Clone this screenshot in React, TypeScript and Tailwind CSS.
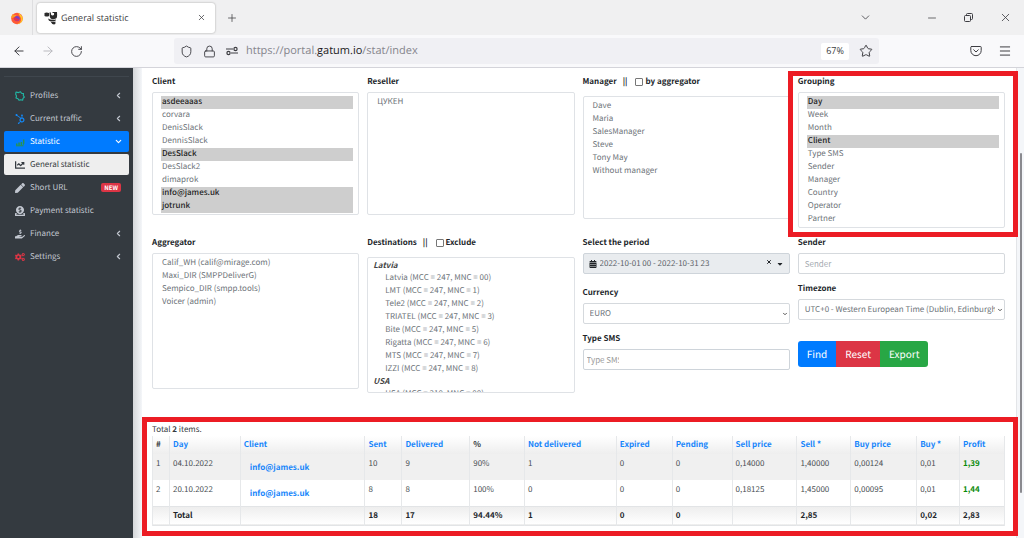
import React, { useState } from 'react';
import { ArrowLeft, ArrowRight, ChevronDown, ChevronLeft, Lock, Menu, Minus, Plus, RotateCw, Shield, Star, X } from 'lucide-react';
import { FaCalendarAlt, FaCaretDown, FaChartLine, FaCogs, FaDonate, FaHandHoldingUsd, FaHubspot, FaPen } from 'react-icons/fa';

const clients = ['asdeeaaas', 'corvara', 'DenisSlack', 'DennisSlack', 'DesSlack', 'DesSlack2', 'dimaprok', 'info@james.uk', 'jotrunk'];
const managers = ['Dave', 'Maria', 'SalesManager', 'Steve', 'Tony May', 'Without manager'];
const groupings = ['Day', 'Week', 'Month', 'Client', 'Type SMS', 'Sender', 'Manager', 'Country', 'Operator', 'Partner'];
const aggregators = ['Calif_WH (calif@mirage.com)', 'Maxi_DIR (SMPPDeliverG)', 'Sempico_DIR (smpp.tools)', 'Voicer (admin)'];
const latvia = [
    'Latvia (MCC = 247, MNC = 00)',
    'LMT (MCC = 247, MNC = 1)',
    'Tele2 (MCC = 247, MNC = 2)',
    'TRIATEL (MCC = 247, MNC = 3)',
    'Bite (MCC = 247, MNC = 5)',
    'Rigatta (MCC = 247, MNC = 6)',
    'MTS (MCC = 247, MNC = 7)',
    'IZZI (MCC = 247, MNC = 8)',
];

const columns = [
    { title: '#', width: 17, sortable: false },
    { title: 'Day', width: 71, sortable: true },
    { title: 'Client', width: 125, sortable: true },
    { title: 'Sent', width: 37, sortable: true },
    { title: 'Delivered', width: 68, sortable: true },
    { title: '%', width: 55, sortable: false },
    { title: 'Not delivered', width: 92, sortable: true },
    { title: 'Expired', width: 56, sortable: true },
    { title: 'Pending', width: 60, sortable: true },
    { title: 'Sell price', width: 65, sortable: true },
    { title: 'Sell *', width: 54, sortable: true },
    { title: 'Buy price', width: 66, sortable: true },
    { title: 'Buy *', width: 43, sortable: true },
    { title: 'Profit', width: 45, sortable: true },
];
const totalWidth = columns.reduce((sum, column) => sum + column.width, 0);

const rows = [
    ['1', '04.10.2022', 'info@james.uk', '10', '9', '90%', '1', '0', '0', '0,14000', '1,40000', '0,00124', '0,01', '1,39'],
    ['2', '20.10.2022', 'info@james.uk', '8', '8', '100%', '0', '0', '0', '0,18125', '1,45000', '0,00095', '0,01', '1,44'],
];
const totals = ['', 'Total', '', '18', '17', '94.44%', '1', '0', '0', '', '2,85', '', '0,02', '2,83'];

const menu = [
    { name: 'Profiles', icon: <ProfilesIcon />, arrow: true },
    { name: 'Current traffic', icon: <FaHubspot className="text-[#1488f5]" />, arrow: true },
    { name: 'Statistic', icon: <StatisticIcon />, open: true },
    { name: 'General statistic', icon: <FaChartLine />, active: true },
    { name: 'Short URL', icon: <FaPen />, badge: 'NEW' },
    { name: 'Payment statistic', icon: <FaDonate /> },
    { name: 'Finance', icon: <FaHandHoldingUsd />, arrow: true },
    { name: 'Settings', icon: <FaCogs className="text-[#dc3545]" />, arrow: true },
];

const listBase = 'block w-full overflow-hidden rounded-xs border border-[#dfe2e6] bg-white text-[8px] leading-3 text-[#6c7278] outline-none';
const listClass = listBase + ' py-[3px] pr-[5px] pl-2';
const optionBase = 'h-[13px] min-h-0 py-0 text-[8px] leading-[13px] checked:bg-[#cecece] checked:text-[#222]';
const optionClass = optionBase + ' px-[1px] checked:font-medium';
const groupOptionClass = optionBase + ' pr-[1px] pl-[14px] font-normal text-[#6c7278] not-italic';
const groupClass = 'font-bold leading-[11px] text-[#444] italic';
const inputClass = 'block h-[21px] w-full rounded-xs border border-[#d5d9dd] bg-white px-[6px] text-[8px] text-[#6c7278] outline-none';
const labelClass = 'block text-[8px] font-bold leading-3 text-[#212529]';

function ProfilesIcon() {
    return (
        <svg viewBox="0 0 10 10" className="h-[10px] w-[10px]" fill="none" stroke="#20b9a6" strokeWidth="1.100" strokeLinejoin="round">
            <path d="M1 1l2.500.6L5.500.8l1 1.400 2 .4-.2 2L9.400 6 8 7.300l-.3 1.900-2-.5L4 9.300 3 7.700 1 7l.5-2-.8-1.800z" />
        </svg>
    );
}

function StatisticIcon() {
    return (
        <svg viewBox="0 0 10 10" className="h-[10px] w-[10px]" fill="#28934f">
            <path d="M1 6.500h1.500v2H1zM3.300 5.500h1.500v3H3.300zM5.600 5h1.500v3.500H5.600zM7.900 2.500h1.500v4l-1.500 2z" />
            <path d="M1 8.300h7.500v1H1z" />
        </svg>
    );
}

function FirefoxLogo() {
    return (
        <svg viewBox="0 0 16 16" className="h-[14px] w-[14px]">
            <circle cx="8" cy="8.6" r="6.6" fill="#ff5a36" />
            <path d="M9.5 1c.2 2 4.8 3.2 5 7.500c.1 3.800-3 6.500-6.500 6.500 3-1 5-3 4.700-6.200C12.400 6 9.500 4.500 9.500 1z" fill="#ffc928" />
            <path d="M1.500 8.500C1.300 5.500 2.500 4 3.500 3c0 1 .5 1.500 1 1.800 1-.4 2-.3 3 .2L6 6.500 1.500 8.500z" fill="#ff9b24" />
            <circle cx="8" cy="8.700" r="3.100" fill="#7442c8" />
            <path d="M4 8c1.500-.8 3-.5 4 .6 1 .8 2 .4 2.500 0-.2 2-1.500 3-3.200 2.700C5.500 11 4.300 9.700 4 8z" fill="#e6314f" />
        </svg>
    );
}

function SiteLogo() {
    return (
        <svg viewBox="0 0 14 14" className="h-[14px] w-[14px]" fill="#2b2b2b">
            <path d="M.5 2q2-.8 4.500 0v3Q3 6 .5 5z" />
            <path d="M5.500 1.500h1.500q-.5 3 1.500 3T10 2H8.500V1H13q.5 6-1 6.500-3 1.200-5 .3-1.500-1-1.500-6.300z" />
            <path d="M4 7.500q3 2 8 1l-.5 1.300q-3.500 1-6.500 0z" />
            <path d="M6.500 10.500q3 .7 5 0 .5 2.500-1.500 3-2 0-3.500-3z" />
        </svg>
    );
}

function Browser() {
    return (
        <header className="shrink-0 font-['Open_Sans','Noto_Sans',sans-serif] text-[#3d3d42]">
            <div className="flex h-[35px] items-center bg-[#f0f0f1]">
                <div className="flex h-full w-[33px] items-center justify-center border-r border-[#dedee0] pl-[1px]">
                    <FirefoxLogo />
                </div>
                <div className="ml-1 flex h-[30px] w-[178px] items-center rounded-[3px] bg-white px-[7px] shadow-[0_0_2px_#999]">
                    <SiteLogo />
                    <span className="ml-[3px] flex-1 whitespace-nowrap text-[9px]">General statistic</span>
                    <button type="button" aria-label="Close tab" className="mr-[2px]"><X size={9} /></button>
                </div>
                <button type="button" aria-label="New tab" className="ml-[11px]"><Plus size={12} strokeWidth={1.5} /></button>
                <div className="flex-1"></div>
                <button type="button" aria-label="List tabs"><ChevronDown size={13} strokeWidth={1.5} /></button>
                <button type="button" aria-label="Minimize" className="ml-[54px]"><Minus size={12} strokeWidth={1.5} /></button>
                <button type="button" aria-label="Restore" className="ml-[26px]">
                    <svg viewBox="0 0 9 9" className="h-[9px] w-[9px]" fill="none" stroke="currentColor">
                        <rect x=".5" y="2.500" width="6" height="6" rx="1" />
                        <path d="M2.500 2.500v-1q0-1 1-1h4q1 0 1 1v4q0 1-1 1h-1" />
                    </svg>
                </button>
                <button type="button" aria-label="Close window" className="mr-3 ml-[26px]"><X size={13} strokeWidth={1.5} /></button>
            </div>
            <div className="flex h-[33px] items-center border-b border-[#d4d4da] bg-[#f9f9fb]">
                <button type="button" aria-label="Back" className="ml-3"><ArrowLeft size={14} strokeWidth={1.7} /></button>
                <button type="button" aria-label="Forward" className="ml-[15px] text-[#b9b9be]"><ArrowRight size={14} strokeWidth={1.7} /></button>
                <button type="button" aria-label="Reload" className="ml-[15px]"><RotateCw size={13} strokeWidth={1.7} /></button>
                <div className="ml-[91px] flex h-[26px] flex-1 items-center rounded-[3px] bg-[#f0f0f4] px-[6px]">
                    <Shield size={13} strokeWidth={1.7} />
                    <Lock size={13} strokeWidth={1.7} className="ml-[10px]" />
                    <svg viewBox="0 0 14 10" className="ml-[9px] h-[10px] w-[14px]" fill="none" stroke="currentColor" strokeWidth="1.200">
                        <path d="M1 3h7M6 7h7" />
                        <circle cx="10.500" cy="3" r="1.600" />
                        <circle cx="3.500" cy="7" r="1.600" />
                    </svg>
                    <div role="textbox" aria-label="Address" className="ml-[7px] flex-1 text-[11px] text-[#85858c]">
                        https://portal.<span className="text-[#1c1b22]">gatum.io</span>/stat/index
                    </div>
                    <button type="button" className="h-[17px] w-7 rounded-[2px] bg-white text-[9px]">67%</button>
                    <button type="button" aria-label="Bookmark" className="ml-[10px]"><Star size={14} strokeWidth={1.7} /></button>
                </div>
                <button type="button" aria-label="Save to Pocket" className="ml-[91px]">
                    <svg viewBox="0 0 12 12" className="h-3 w-3" fill="none" stroke="currentColor" strokeLinecap="round" strokeLinejoin="round">
                        <path d="M1.500 1.500h9q.7 0 .7.700V5.500a5.200 5.200 0 0 1-10.400 0V2.200q0-.7.700-.7z" />
                        <path d="M3.700 4.800L6 7l2.300-2.200" />
                    </svg>
                </button>
                <button type="button" aria-label="Menu" className="mr-3 ml-4"><Menu size={14} strokeWidth={1.7} /></button>
            </div>
        </header>
    );
}

function Sidebar() {
    return (
        <nav className="w-[133px] shrink-0 bg-[#343a40] px-1 pt-2 text-[8px] text-[#c2c7d0]">
            <div className="mb-2 border-t border-[#3f464d]"></div>
            <ul className="flex flex-col gap-[2px]">
                {menu.map((item) => (
                    <li key={item.name}>
                        <a
                            href="#"
                            className={
                                item.open
                                    ? 'flex h-[21px] items-center rounded-[2px] bg-[#007bff] pr-[6px] pl-[11px] text-white'
                                    : item.active
                                        ? 'flex h-[21px] items-center rounded-[2px] bg-[#eeeeee] pr-[6px] pl-[11px] text-[#343a40]'
                                        : 'flex h-[21px] items-center rounded-[2px] pr-[6px] pl-[11px]'
                            }
                        >
                            <span className="flex w-[15px] text-[10px]">{item.icon}</span>
                            <span className="flex-1 leading-3 whitespace-nowrap">{item.name}</span>
                            {item.arrow && <ChevronLeft size={9} strokeWidth={3} />}
                            {item.open && <ChevronDown size={9} strokeWidth={3} />}
                            {item.badge && <span className="mr-[2px] rounded-[2px] bg-[#dc3545] px-[3px] text-[6px] font-bold leading-[9px] text-white">{item.badge}</span>}
                        </a>
                    </li>
                ))}
            </ul>
        </nav>
    );
}

function StatTable() {
    return (
        <table className="w-full table-fixed border-collapse text-left text-[8px] leading-3 text-[#4a4f54]">
            <colgroup>
                {columns.map((column) => (
                    <col key={column.title} style={{ width: (column.width / totalWidth) * 100 + '%' }} />
                ))}
            </colgroup>
            <thead>
                <tr className="h-[18px] bg-linear-to-b from-white to-[#eeeeee]">
                    {columns.map((column) => (
                        <th key={column.title} className="border-x border-[#e6e8ea] px-[3px] whitespace-nowrap text-[#343a40]">
                            {column.sortable ? <a href="#" className="text-[#1685fb]">{column.title}</a> : column.title}
                        </th>
                    ))}
                </tr>
            </thead>
            <tbody>
                {rows.map((row) => (
                    <tr key={row[0]} className="h-[26px] align-top odd:bg-[#f0f0f0]">
                        {row.map((cell, i) => (
                            <td key={i} className="border-x border-[#e6e8ea] px-[3px] pt-1">
                                {i === 2 ? (
                                    <a href="#" className="block px-[6px] pt-1 font-bold text-[#1685fb]">{cell}</a>
                                ) : i === 13 ? (
                                    <span className="font-bold text-[#078a07]">{cell}</span>
                                ) : cell}
                            </td>
                        ))}
                    </tr>
                ))}
            </tbody>
            <tfoot>
                <tr className="h-[19px] border-y border-[#e2e4e6] bg-linear-to-b from-[#eeeeee] to-white font-bold text-[#212529]">
                    {totals.map((cell, i) => (
                        <td key={i} className="border-x border-[#e6e8ea] px-[3px]">{cell}</td>
                    ))}
                </tr>
            </tfoot>
        </table>
    );
}

function App() {
    const [sender, setSender] = useState<string>('');
    const [byAggregator, setByAggregator] = useState<boolean>(false);
    const [exclude, setExclude] = useState<boolean>(false);

    return (
        <div className="flex h-screen flex-col overflow-hidden bg-white font-['Noto_Sans_CJK_SC',sans-serif] [text-rendering:geometricPrecision]">
            <Browser />
            <div className="flex min-h-0 flex-1">
                <Sidebar />
                <main className="flex min-w-0 flex-1 bg-linear-to-r from-[#d5d7da] to-[#f4f6f9] to-[9px] pr-[2px] pl-[9px]">
                    <div className="min-w-0 flex-1 border-r border-[#e3e5e8] bg-white pt-2 pr-[11px] pl-[10px]">
                        <form onSubmit={(e) => e.preventDefault()}>
                            <div className="grid grid-cols-4 gap-x-2">
                                <div>
                                    <label htmlFor="client" className={labelClass}>Client</label>
                                    <select id="client" multiple defaultValue={['asdeeaaas', 'DesSlack', 'info@james.uk', 'jotrunk']} className={listClass + ' mt-1 h-[123px] [text-rendering:inherit]'}>
                                        {clients.map((name) => <option key={name} className={optionClass}>{name}</option>)}
                                    </select>
                                </div>
                                <div>
                                    <label htmlFor="reseller" className={labelClass}>Reseller</label>
                                    <select id="reseller" multiple className={listClass + ' mt-1 h-[123px] [text-rendering:inherit]'}>
                                        <option className={optionClass}>ЦУКЕН</option>
                                    </select>
                                </div>
                                <div>
                                    <div className="flex items-center">
                                        <label htmlFor="manager" className={labelClass}>Manager</label>
                                        <span className={labelClass + ' mr-2 ml-[6px]'}>||</span>
                                        <input id="by-aggregator" type="checkbox" checked={byAggregator} onChange={(e) => setByAggregator(e.target.checked)} className="mr-[2px] h-2 w-2 appearance-none rounded-[1px] border border-[#777] checked:bg-[#007bff]" />
                                        <label htmlFor="by-aggregator" className={labelClass}>by aggregator</label>
                                    </div>
                                    <select id="manager" multiple className={listClass + ' mt-2 h-[123px] [text-rendering:inherit]'}>
                                        {managers.map((name) => <option key={name} className={optionClass}>{name}</option>)}
                                    </select>
                                </div>
                                <div className="relative">
                                    <label htmlFor="grouping" className={labelClass}>Grouping</label>
                                    <select id="grouping" multiple defaultValue={['Day', 'Client']} className={listClass + ' mt-1 h-[136px] [text-rendering:inherit]'}>
                                        {groupings.map((name) => <option key={name} className={optionClass}>{name}</option>)}
                                    </select>
                                    <div className="pointer-events-none absolute -top-[5px] -right-[13px] -bottom-[9px] -left-[10px] border-[5px] border-[#ec1c24]"></div>
                                </div>
                            </div>
                            <div className="mt-[9px] grid grid-cols-4 gap-x-2">
                                <div>
                                    <label htmlFor="aggregator" className={labelClass}>Aggregator</label>
                                    <select id="aggregator" multiple className={listClass + ' mt-1 h-[136px] [text-rendering:inherit]'}>
                                        {aggregators.map((name) => <option key={name} className={optionClass}>{name}</option>)}
                                    </select>
                                </div>
                                <div>
                                    <div className="flex items-center">
                                        <label htmlFor="destinations" className={labelClass}>Destinations</label>
                                        <span className={labelClass + ' mr-2 ml-[6px]'}>||</span>
                                        <input id="exclude" type="checkbox" checked={exclude} onChange={(e) => setExclude(e.target.checked)} className="mr-[2px] h-2 w-2 appearance-none rounded-[1px] border border-[#777] checked:bg-[#007bff]" />
                                        <label htmlFor="exclude" className={labelClass}>Exclude</label>
                                    </div>
                                    <select id="destinations" multiple className={listBase + ' mt-2 h-[136px] px-[3px] pt-[2px] [text-rendering:inherit]'}>
                                        <optgroup label="Latvia" className={groupClass}>
                                            {latvia.map((name) => <option key={name} className={groupOptionClass}>{name}</option>)}
                                        </optgroup>
                                        <optgroup label="USA" className={groupClass}>
                                            <option className={groupOptionClass}>USA (MCC = 310, MNC = 00)</option>
                                        </optgroup>
                                    </select>
                                </div>
                                <div>
                                    <label htmlFor="period" className={labelClass}>Select the period</label>
                                    <div className="mt-1 flex h-[21px] items-center rounded-xs border border-[#ced4da] bg-[#e9ecef] px-[5px] text-[8px] text-[#212529]">
                                        <FaCalendarAlt size={8} />
                                        <input id="period" readOnly value="2022-10-01 00 - 2022-10-31 23" className="ml-[3px] min-w-0 flex-1 bg-transparent text-[#5d6369] outline-none [text-rendering:inherit]" />
                                        <button type="button" aria-label="Clear period" className="mr-1 mb-[3px]"><X size={6} strokeWidth={4} /></button>
                                        <button type="button" aria-label="Open calendar"><FaCaretDown size={8} /></button>
                                    </div>
                                    <label htmlFor="currency" className={labelClass + ' mt-[13px]'}>Currency</label>
                                    <div className="relative mt-1">
                                        <select id="currency" className={inputClass + ' appearance-none [text-rendering:inherit]'}>
                                            <option>EURO</option>
                                        </select>
                                        <ChevronDown size={6} strokeWidth={4} className="pointer-events-none absolute top-2 right-[2px] text-[#555]" />
                                    </div>
                                    <label htmlFor="type-sms" className={labelClass + ' mt-[9px]'}>Type SMS</label>
                                    <div className="mt-1 flex h-[21px] items-center rounded-xs border border-[#ced4da] px-[3px]">
                                        <input id="type-sms" placeholder="Type SMS" className="w-8 text-[8px] outline-none placeholder:text-[#999]" />
                                    </div>
                                </div>
                                <div>
                                    <label htmlFor="sender" className={labelClass}>Sender</label>
                                    <input id="sender" value={sender} onChange={(e) => setSender(e.target.value)} placeholder="Sender" className={inputClass + ' mt-1 placeholder:text-[#a5abb1]'} />
                                    <label htmlFor="timezone" className={labelClass + ' mt-[9px]'}>Timezone</label>
                                    <div className="relative mt-1">
                                        <select id="timezone" className={inputClass + ' appearance-none pr-[9px] [text-rendering:inherit]'}>
                                            <option>UTC+0 - Western European Time (Dublin, Edinburgh, Lisbon, London)</option>
                                        </select>
                                        <ChevronDown size={6} strokeWidth={4} className="pointer-events-none absolute top-2 right-[2px] text-[#555]" />
                                    </div>
                                    <div className="mt-[21px] flex h-[26px] text-[10px] leading-4 text-white">
                                        <button type="submit" className="rounded-l-[3px] bg-[#007bff] px-[9px] [text-rendering:inherit]">Find</button>
                                        <button type="reset" className="bg-[#dc3545] px-[9px] [text-rendering:inherit]">Reset</button>
                                        <button type="button" className="rounded-r-[3px] bg-[#28a745] px-[9px] [text-rendering:inherit]">Export</button>
                                    </div>
                                </div>
                            </div>
                        </form>
                        <section className="relative mt-[31px]">
                            <p className="text-[8px] leading-3 text-[#343a40]">Total <b>2</b> items.</p>
                            <StatTable />
                            <div className="pointer-events-none absolute -top-[7px] -right-[13px] -bottom-[10px] -left-[10px] border-[5px] border-[#ec1c24]"></div>
                        </section>
                    </div>
                    <div className="ml-[3px] w-[2px] pt-[85px]">
                        <div className="h-[340px] rounded-full bg-[#8a8a8f]"></div>
                    </div>
                </main>
            </div>
        </div>
    );
}

export default App;
